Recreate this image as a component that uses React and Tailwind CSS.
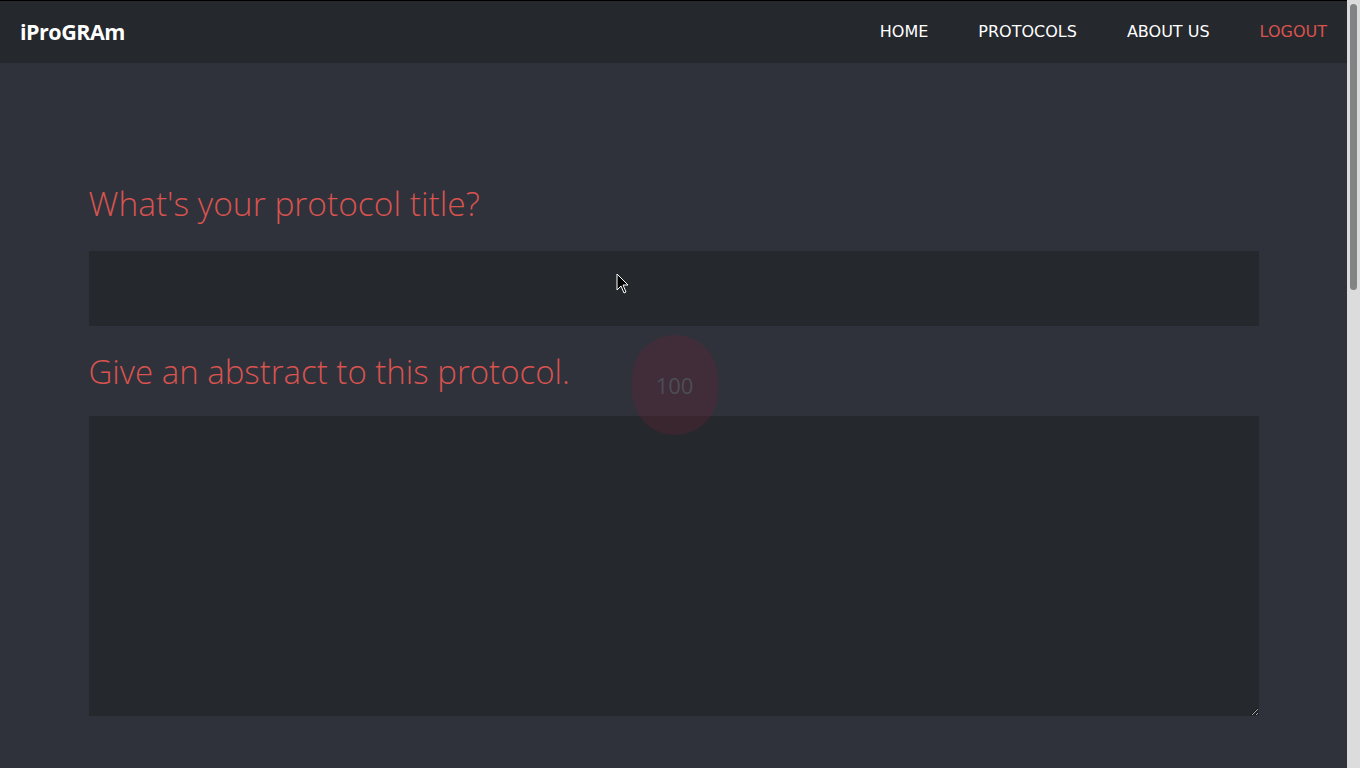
export default function App() {
	return (
		<div className="h-screen flex overflow-hidden bg-[#2f323b] font-['DejaVu_Sans',sans-serif]">
			<div className="flex-1 min-w-0">
				{/* Navbar */}
				<nav className="h-[63px] border-t border-black bg-[#25282d] flex items-center justify-between pl-5 pr-[20px]">
					<a className="text-[21.5px] font-bold text-white tracking-[-0.5px] font-['Open_Sans',sans-serif]">iProGRAm</a>
					<ul className="flex items-center gap-[50px] text-[16px] text-white">
						<li>HOME</li>
						<li>PROTOCOLS</li>
						<li>ABOUT US</li>
						<li className="text-[#d9534f]">LOGOUT</li>
					</ul>
				</nav>

				{/* Form */}
				<main className="relative mx-auto w-[1170px] pt-[116px] font-['Open_Sans',sans-serif]">
					<h2 className="text-[33.5px] font-light leading-[48px] text-[#d9534f] mb-[24px]">What's your protocol title?</h2>
					<input className="block w-full h-[75px] bg-[#25282d] outline-none px-4 text-white text-xl" />
					<h2 className="mt-[22px] text-[33px] font-light leading-[48px] text-[#d9534f] mb-[20px]">Give an abstract to this protocol.</h2>
					<textarea className="block w-full h-[300px] bg-[#25282d] outline-none p-4 text-white text-lg" />

					{/* Word counter bubble */}
					<div className="absolute left-[543px] top-[272px] w-[86px] h-[100px] rounded-full bg-[#6b2535]/30 flex items-center justify-center text-[22px] text-[#4b4e56]">
						100
					</div>

					{/* Mouse pointer */}
					<svg className="absolute left-[527px] top-[210px]" width="14" height="22" viewBox="0 0 14 22">
						<path d="M1 1 L1 17 L5 13 L8 20 L10 19 L7 12 L12 12 Z" fill="#000" stroke="#fff" strokeWidth="1" />
					</svg>
				</main>
			</div>

			{/* Scrollbar */}
			<div className="w-[13px] shrink-0 bg-[#dcdcdc] pt-[4px] flex justify-center">
				<div className="w-[7px] h-[286px] rounded-full bg-[#808484]" />
			</div>
		</div>
	);
}
